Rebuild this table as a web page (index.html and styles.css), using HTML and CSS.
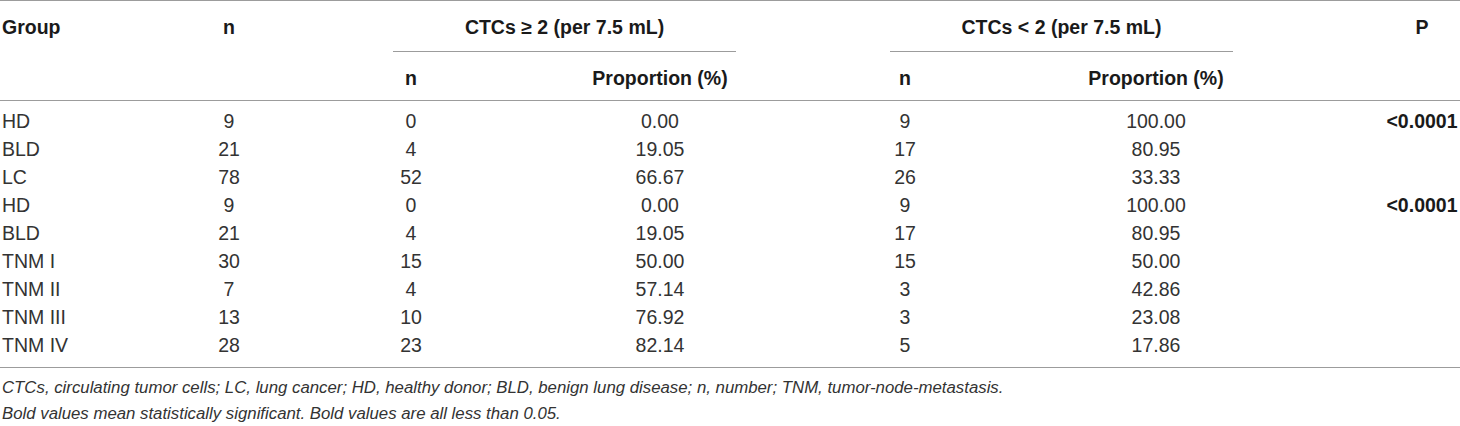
FILE: index.html
```html
<!DOCTYPE html>
<html lang="en">
<head>
<meta charset="utf-8">
<title>CTC table</title>
<link rel="stylesheet" href="styles.css">
</head>
<body>
<div class="wrap">
  <table class="tbl">
    <colgroup>
      <col class="c-group">
      <col class="c-n">
      <col class="c-sn1">
      <col class="c-sp1">
      <col class="c-sn2">
      <col class="c-sp2">
      <col class="c-p">
    </colgroup>
    <thead>
      <tr>
        <th class="h-top left" rowspan="2">Group</th>
        <th class="h-top" rowspan="2">n</th>
        <th class="h-span" colspan="2"><div class="span-label span-a">CTCs ≥ 2 (per 7.5 mL)</div></th>
        <th class="h-span" colspan="2"><div class="span-label span-b">CTCs &lt; 2 (per 7.5 mL)</div></th>
        <th class="h-top" rowspan="2">P</th>
      </tr>
      <tr>
        <th class="h-sub">n</th>
        <th class="h-sub">Proportion (%)</th>
        <th class="h-sub">n</th>
        <th class="h-sub">Proportion (%)</th>
      </tr>
    </thead>
    <tbody>
      <tr class="first"><td class="left">HD</td><td>9</td><td>0</td><td>0.00</td><td>9</td><td>100.00</td><td class="sig">&lt;0.0001</td></tr>
      <tr><td class="left">BLD</td><td>21</td><td>4</td><td>19.05</td><td>17</td><td>80.95</td><td></td></tr>
      <tr><td class="left">LC</td><td>78</td><td>52</td><td>66.67</td><td>26</td><td>33.33</td><td></td></tr>
      <tr><td class="left">HD</td><td>9</td><td>0</td><td>0.00</td><td>9</td><td>100.00</td><td class="sig">&lt;0.0001</td></tr>
      <tr><td class="left">BLD</td><td>21</td><td>4</td><td>19.05</td><td>17</td><td>80.95</td><td></td></tr>
      <tr><td class="left">TNM I</td><td>30</td><td>15</td><td>50.00</td><td>15</td><td>50.00</td><td></td></tr>
      <tr><td class="left">TNM II</td><td>7</td><td>4</td><td>57.14</td><td>3</td><td>42.86</td><td></td></tr>
      <tr><td class="left">TNM III</td><td>13</td><td>10</td><td>76.92</td><td>3</td><td>23.08</td><td></td></tr>
      <tr class="last"><td class="left">TNM IV</td><td>28</td><td>23</td><td>82.14</td><td>5</td><td>17.86</td><td></td></tr>
    </tbody>
  </table>
  <div class="notes">
    <p>CTCs, circulating tumor cells; LC, lung cancer; HD, healthy donor; BLD, benign lung disease; n, number; TNM, tumor-node-metastasis.</p>
    <p>Bold values mean statistically significant. Bold values are all less than 0.05.</p>
  </div>
</div>
</body>
</html>
```
FILE: styles.css
```css
html, body {
  margin: 0;
  padding: 0;
  background: #ffffff;
}

.wrap {
  width: 1460px;
  font-family: "Liberation Sans", Arial, sans-serif;
  color: #333333;
}

.tbl {
  width: 1460px;
  table-layout: fixed;
  border-collapse: collapse;
  border-top: 1px solid #9c9c9c;
  border-bottom: 1px solid #9c9c9c;
  font-size: 19.5px;
  line-height: 28px;
}

.c-group { width: 74px; }
.c-n { width: 310px; }
.c-sn1 { width: 54px; }
.c-sp1 { width: 444px; }
.c-sn2 { width: 46px; }
.c-sp2 { width: 456px; }
.c-p { width: 76px; }

.tbl th,
.tbl td {
  padding: 0;
  text-align: center;
  white-space: nowrap;
}

.tbl th {
  font-weight: bold;
  color: #1a1a1a;
}

.tbl .left {
  text-align: left;
  padding-left: 2px;
}

.tbl thead {
  border-bottom: 1px solid #9c9c9c;
}

.h-top {
  vertical-align: top;
  padding-top: 12px !important;
}

.h-span {
  vertical-align: top;
}

.span-label {
  width: 343px;
  padding: 12px 0 10px;
  border-bottom: 1px solid #9c9c9c;
  text-align: center;
}

.span-a { margin-left: 9px; }
.span-b { margin-left: 8px; }

.h-sub {
  padding: 12px 0 8px !important;
}

.tbl tbody tr.first td {
  padding-top: 6px;
}

.tbl tbody tr.last td {
  padding-bottom: 8px;
}

.tbl td.sig {
  font-weight: bold;
  color: #1a1a1a;
}

.notes {
  padding-top: 7px;
  font-size: 16.8px;
  line-height: 26px;
  font-style: italic;
  color: #333333;
}

.notes p {
  margin: 0;
  padding-left: 2px;
}
```
